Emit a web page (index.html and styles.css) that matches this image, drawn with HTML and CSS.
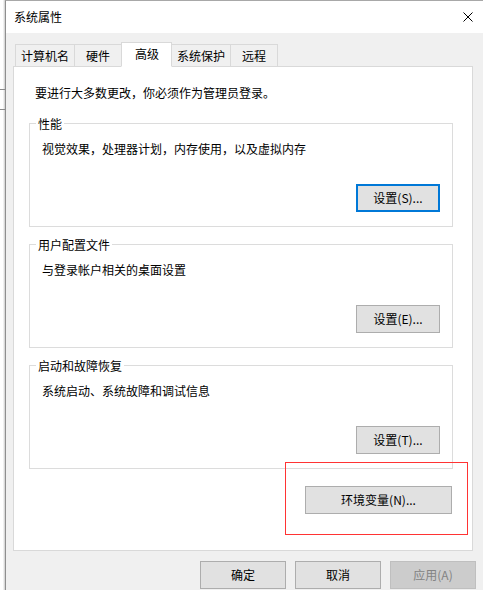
FILE: index.html
```html
<!DOCTYPE html>
<html lang="zh-CN">
<head>
<meta charset="utf-8">
<title>系统属性</title>
<link rel="stylesheet" href="styles.css">
</head>
<body>
<div class="screen">
  <div class="bg-strip">
    <span class="bg-mark bg-mark-a"></span>
    <span class="bg-mark bg-mark-b"></span>
  </div>
  <div class="dialog">
    <div class="titlebar">
      <span class="title">系统属性</span>
      <svg class="close" width="10" height="10" viewBox="0 0 10 10" aria-hidden="true">
        <path d="M0.5 0.5 L9.5 9.5 M9.5 0.5 L0.5 9.5" stroke="#000" stroke-width="1" fill="none"/>
      </svg>
    </div>
    <div class="body">
      <div class="tabs">
        <div class="tab tab-wide">计算机名</div>
        <div class="tab">硬件</div>
        <div class="tab tab-active">高级</div>
        <div class="tab tab-wide">系统保护</div>
        <div class="tab">远程</div>
      </div>
      <div class="panel">
        <p class="notice">要进行大多数更改，你必须作为管理员登录。</p>
        <fieldset class="group">
          <legend>性能</legend>
          <div class="group-body">
            <p class="desc">视觉效果，处理器计划，内存使用，以及虚拟内存</p>
            <div class="group-actions"><button class="btn btn-focus">设置(S)...</button></div>
          </div>
        </fieldset>
        <fieldset class="group">
          <legend>用户配置文件</legend>
          <div class="group-body">
            <p class="desc">与登录帐户相关的桌面设置</p>
            <div class="group-actions"><button class="btn">设置(E)...</button></div>
          </div>
        </fieldset>
        <fieldset class="group">
          <legend>启动和故障恢复</legend>
          <div class="group-body">
            <p class="desc">系统启动、系统故障和调试信息</p>
            <div class="group-actions"><button class="btn">设置(T)...</button></div>
          </div>
        </fieldset>
        <div class="env-row"><button class="btn btn-env">环境变量(N)...</button></div>
        <div class="highlight"></div>
      </div>
      <div class="footer">
        <button class="btn btn-footer">确定</button>
        <button class="btn btn-footer">取消</button>
        <button class="btn btn-footer btn-disabled">应用(A)</button>
      </div>
    </div>
  </div>
</div>
</body>
</html>
```
FILE: styles.css
```css
html, body {
  margin: 0;
  padding: 0;
  height: 100%;
}

body {
  font-family: "Noto Sans CJK SC", "Microsoft YaHei", sans-serif;
  font-size: 12px;
  color: #000;
  background: #fff;
  overflow: hidden;
}

.screen {
  display: flex;
  width: 483px;
  height: 590px;
}

.bg-strip {
  flex: none;
  width: 5px;
  background: linear-gradient(to right, #fff 0, #fff 3px, #e2e2e2 4px, #cfcfcf 5px);
  display: flex;
  flex-direction: column;
}

.bg-mark {
  display: block;
  height: 1px;
  background: #8a8a8a;
}

.bg-mark-a {
  margin-top: 89px;
}

.bg-mark-b {
  margin-top: 19px;
}

.dialog {
  flex: 1;
  min-width: 0;
  display: flex;
  flex-direction: column;
  background: #f0f0f0;
  border-left: 1px solid #8f8f8f;
  border-top: 1px solid #a8a8a8;
}

.titlebar {
  flex: none;
  height: 32px;
  background: #fff;
  display: flex;
  align-items: center;
  justify-content: space-between;
  padding: 0 10px 0 8px;
}

.title {
  line-height: 16px;
}

.close {
  display: block;
}

.body {
  flex: 1;
  display: flex;
  flex-direction: column;
  padding: 9px 0 0 7px;
}

.tabs {
  display: flex;
  align-items: flex-end;
  height: 25px;
  padding-left: 2px;
  margin-bottom: -1px;
  position: relative;
  z-index: 1;
}

.tab {
  box-sizing: border-box;
  height: 23px;
  line-height: 21px;
  padding: 0 11px;
  background: #f0f0f0;
  border: 1px solid #d9d9d9;
  border-right: none;
  white-space: nowrap;
}

.tab-wide {
  padding: 0 5px;
}

.tab-active {
  height: 25px;
  line-height: 21px;
  padding: 0 12px 0 13px;
  background: #fff;
  border-right: 1px solid #d9d9d9;
  border-bottom-color: #fff;
}

.tab-active + .tab {
  border-left: none;
}

.tab:last-child {
  border-right: 1px solid #d9d9d9;
}

.panel {
  position: relative;
  background: #fff;
  border: 1px solid #d9d9d9;
  margin-right: 10px;
  padding: 18px 19px 36px 15px;
}

.notice {
  margin: 0 0 15px 6px;
  line-height: 16px;
}

.group {
  margin: 0 0 10px 0;
  padding: 0;
  min-width: 0;
  border: 1px solid #dcdcdc;
}

.group legend {
  margin-left: 6px;
  padding: 0 2px;
  line-height: 15px;
  font-size: 12px;
}

.group-body {
  padding: 10px 12px 14px 12px;
}

.desc {
  margin: 0;
  line-height: 16px;
}

.group-actions {
  display: flex;
  justify-content: flex-end;
  margin-top: 27px;
}

.btn {
  font: inherit;
  font-size: 12px;
  box-sizing: border-box;
  width: 84px;
  height: 28px;
  padding: 0;
  margin: 0;
  line-height: 1;
  color: #000;
  background: #e1e1e1;
  border: 1px solid #adadad;
  border-radius: 0;
}

.btn-focus {
  border: 2px solid #0078d7;
}

.env-row {
  display: flex;
  justify-content: flex-end;
  margin-top: 17px;
  padding-right: 1px;
}

.btn-env {
  width: 147px;
}

.highlight {
  position: absolute;
  left: 271px;
  top: 395px;
  width: 181px;
  height: 71px;
  border: 1px solid #ff3333;
  pointer-events: none;
}

.footer {
  display: flex;
  justify-content: flex-end;
  gap: 9px;
  margin-top: 10px;
  padding-right: 7px;
}

.btn-footer {
  width: 86px;
}

.btn-disabled {
  background: #cccccc;
  border-color: #bfbfbf;
  color: #838383;
}
```
